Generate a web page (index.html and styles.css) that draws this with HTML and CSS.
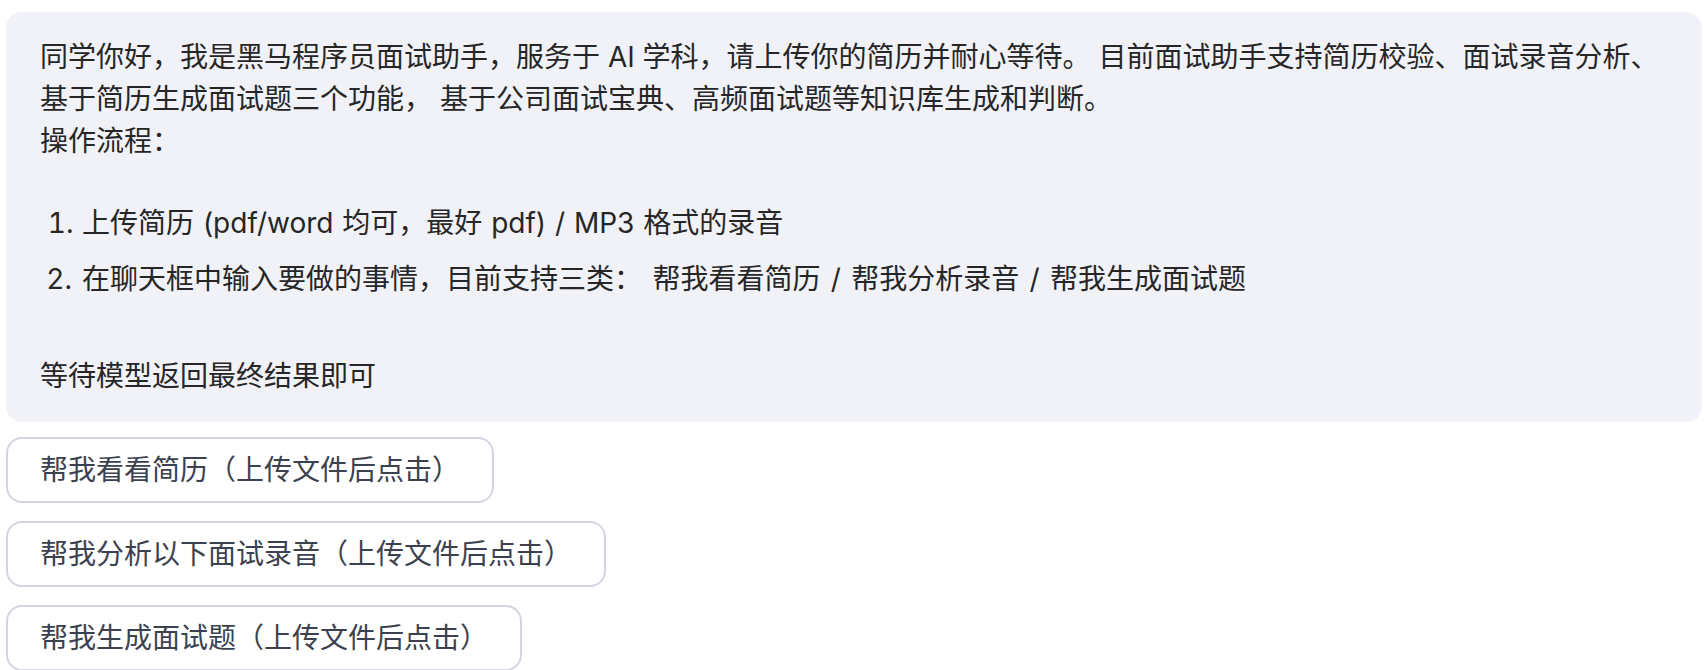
FILE: index.html
```html
<!DOCTYPE html>
<html lang="zh-CN">
<head>
<meta charset="utf-8">
<title>面试助手</title>
<link rel="stylesheet" href="styles.css">
</head>
<body>
<div class="chat">
  <div class="bubble">
    <p class="intro">同学你好，我是黑马程序员面试助手，服务于 AI 学科，请上传你的简历并耐心等待。 目前面试助手支持简历校验、面试录音分析、基于简历生成面试题三个功能， 基于公司面试宝典、高频面试题等知识库生成和判断。<br>操作流程：</p>
    <ol class="steps">
      <li class="step-one">上传简历 (pdf/word 均可，最好 pdf) / MP3 格式的录音</li>
      <li>在聊天框中输入要做的事情，目前支持三类： 帮我看看简历 / 帮我分析录音 / 帮我生成面试题</li>
    </ol>
    <p class="outro">等待模型返回最终结果即可</p>
  </div>
  <div class="actions">
    <button class="action">帮我看看简历（上传文件后点击）</button>
    <button class="action">帮我分析以下面试录音（上传文件后点击）</button>
    <button class="action">帮我生成面试题（上传文件后点击）</button>
  </div>
</div>
</body>
</html>
```
FILE: styles.css
```css
html, body {
  margin: 0;
  padding: 0;
  background: #ffffff;
}

body {
  font-family: Inter, "Noto Sans CJK SC", sans-serif;
  font-size: 28px;
  line-height: 42px;
  color: #262626;
}

.chat {
  display: flex;
  flex-direction: column;
  align-items: flex-start;
  gap: 15px;
  padding: 12px 2px 0 6px;
}

.bubble {
  align-self: stretch;
  background: #f1f2f7;
  border-radius: 16px;
  padding: 24px 32px 25px 34px;
}

.intro {
  margin: 0;
}

.steps {
  margin: 40px 0 0 0;
  padding-left: 42px;
  word-spacing: 2.5px;
}

.steps .step-one {
  word-spacing: 1px;
}

.steps li + li {
  margin-top: 14px;
}

.outro {
  margin: 55px 0 0 0;
}

.actions {
  display: flex;
  flex-direction: column;
  align-items: flex-start;
  gap: 18px;
}

.action {
  font-family: Inter, "Noto Sans CJK SC", sans-serif;
  font-size: 28px;
  line-height: 42px;
  color: #3b414e;
  background: #ffffff;
  border: 2px solid #d3d6e2;
  border-radius: 16px;
  padding: 10px 32px;
  margin: 0;
  cursor: pointer;
}
```
